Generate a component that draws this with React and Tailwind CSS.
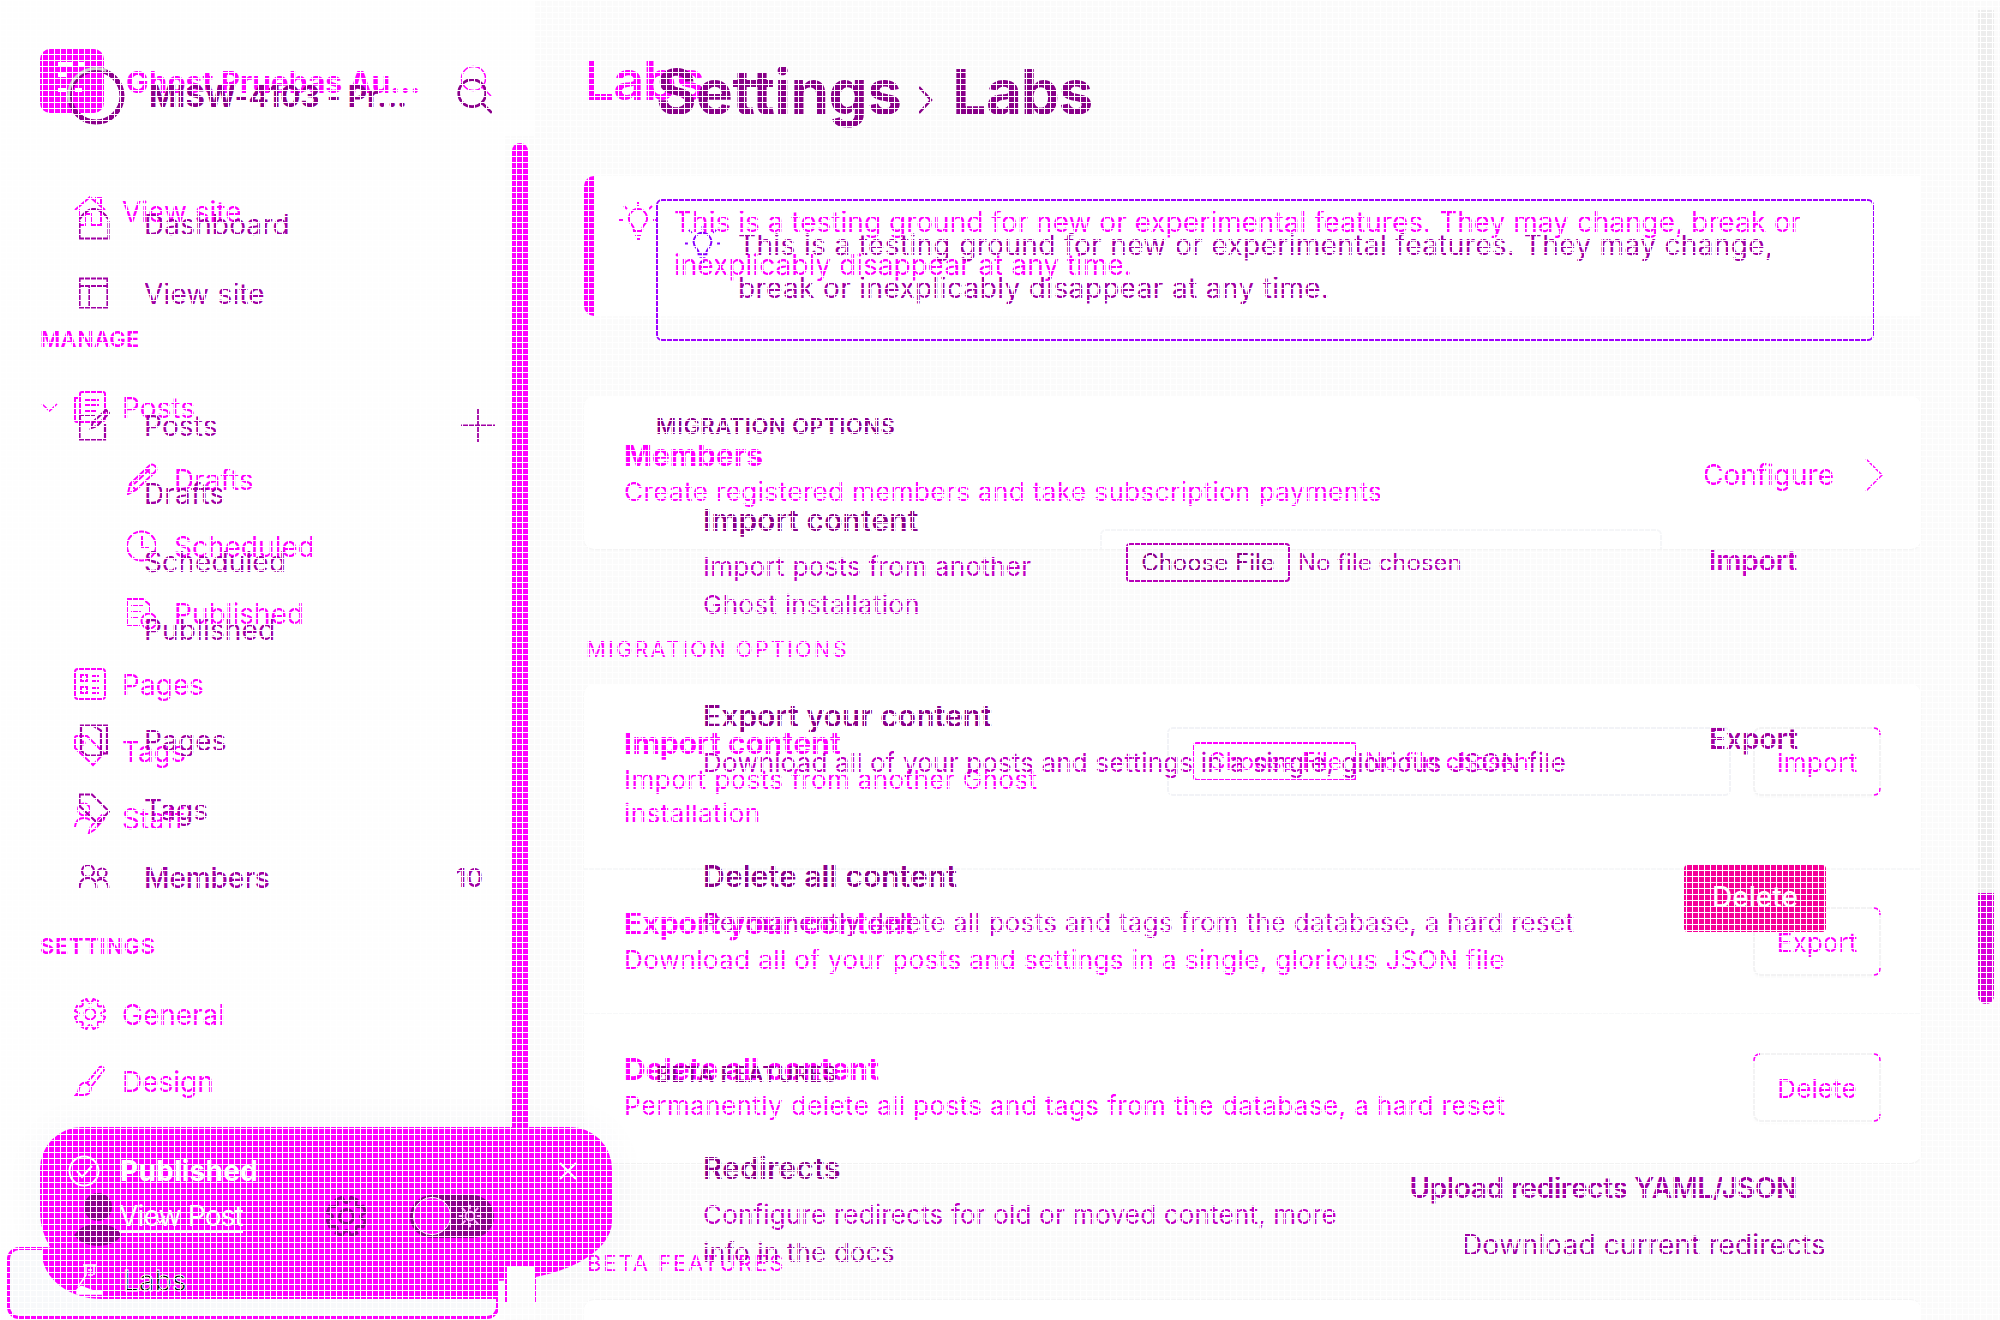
function Svg({ className = "size-8", w = 2, box = "0 0 32 32", children }) {
  return (
    <svg className={"shrink-0 " + className} viewBox={box} fill="none" stroke="currentColor" strokeWidth={w}>
      {children}
    </svg>
  );
}

const gearPath =
  "M12.500 1Q16 9 19.500 1L24 3Q21 10 29 8L31 13Q23 16 31 19L29 24Q21 22 24 29L19.500 31Q16 23 12.500 31L8 29Q11 22 3 24L1 19Q9 16 1 13L3 8Q11 10 8 3Z";

const icons = {
  home: (
    <Svg>
      <path d="M1 15 16 2l15 13M5 14v16h6V19h6v11h10V14M22 6V3h5v8" />
    </Svg>
  ),
  posts: (
    <Svg>
      <rect x="6" y="1" width="25" height="29" rx="2" />
      <path d="M6 7H1v22q0 2 2 2h22M11 9h14M11 14h14M11 20h11" />
    </Svg>
  ),
  pencil: (
    <Svg>
      <path d="M2 31l2-10L23 3q3-3 6 0t0 6L10 27zM4 21l6 6M8 21 24 6M20 6l6 6" />
    </Svg>
  ),
  clock: (
    <Svg>
      <circle cx="15.500" cy="16" r="14.500" />
      <path d="M16 6v11h7" />
    </Svg>
  ),
  doc: (
    <Svg>
      <path d="M14 28H1V2h16l7 6v7M5 9h12M5 15h10M5 21h8" />
      <circle cx="23" cy="24" r="7.500" />
      <path d="m20 24 2 2 4-4" />
    </Svg>
  ),
  list: (
    <Svg>
      <rect x="1" y="1" width="30" height="30" rx="3" />
      <rect x="7" y="7" width="6" height="6" />
      <rect x="7" y="19" width="6" height="6" />
      <path d="M18 8h7M18 13h7M18 20h7M18 25h7" />
    </Svg>
  ),
  tagA: (
    <Svg>
      <path d="M1 3q0-2 2-2h10l17 17-11 12L1 13z" />
      <circle cx="9" cy="8" r="1.500" />
    </Svg>
  ),
  staff: (
    <Svg>
      <circle cx="10" cy="7.500" r="6" />
      <path d="M1 25q1-9 9-9 4 0 6 2M15 31l2-7L28 13q3 0 2 4L20 28z" />
    </Svg>
  ),
  gear: (
    <Svg>
      <path d={gearPath} />
      <circle cx="16" cy="16" r="5.500" />
    </Svg>
  ),
  brush: (
    <Svg>
      <path d="M13 18 26 2q4-1 4 3L17 22M13 18l4 4q0 8-8 8H2q3-3 3-7 2-6 8-5z" />
    </Svg>
  ),
  dashboard: (
    <Svg w="2.200">
      <path d="M1.500 13v17.500h29V13M1.500 11q14-20 29 0" />
    </Svg>
  ),
  layout: (
    <Svg w="2.200">
      <path d="M1.500 1.500h28v29h-28zM1.500 9h28M11.500 9v21" />
    </Svg>
  ),
  edit: (
    <Svg w="2.200">
      <path d="M17 6H1.500v24.500H27V15M13 19l2-6L28 1l3 3-12 13z" />
    </Svg>
  ),
  pages: (
    <Svg w="2.200">
      <path d="M8 1.500h21v28h-5M3 1.500h12l8 5v25H9l-6-5zM3 1.500l5 0" />
    </Svg>
  ),
  tagB: (
    <Svg w="2.200">
      <path d="M1.500 1.500H14l17 17-11 12L1.500 13z" />
    </Svg>
  ),
  members: (
    <Svg w="2.200">
      <circle cx="10" cy="10" r="6" />
      <path d="M1.500 28q0-11 8.500-11t8.500 11M30.500 28q0-8-7-10-3 0-5 2" />
      <circle cx="24" cy="12" r="4.500" />
    </Svg>
  ),
};

function Bulb({ className }) {
  return (
    <Svg className={className} box="0 0 38 38" w="2">
      <path d="M15 29q0-4-2-6-5-5-2-11 3-5 8-5t8 5q3 6-2 11-2 2-2 6zM16 33h6M17 37h4M19 0v4M5 4l3 3M33 4l-3 3M0 18h4M34 18h4" />
    </Svg>
  );
}

function Magnifier({ className, w }) {
  return (
    <Svg className={className} w={w}>
      <circle cx="13.500" cy="13.500" r="12" />
      <path d="m22 22 9 9" />
    </Svg>
  );
}

function NavA({ icon, label, className = "", indent = "pl-[74px]", gap = "gap-4", chevron }) {
  return (
    <div className={"flex h-10 items-center " + (chevron ? "pl-[41px] " : indent + " ") + gap + " " + className}>
      {chevron && (
        <Svg className="h-[9px] w-[17px]" box="0 0 17 9" w="1.500">
          <path d="m1 1 7.500 7L16 1" />
        </Svg>
      )}
      {icons[icon]}
      <span className="pt-px text-[28px] tracking-[0px]">{label}</span>
    </div>
  );
}

function NavB({ icon, label, className = "", right, bold }) {
  return (
    <div className={"flex h-10 items-center pl-[78px] " + className}>
      <span className="w-[66px] shrink-0">{icon && icons[icon]}</span>
      <span className={"grow pt-px text-[28px] " + (bold ? "font-medium tracking-[-0.1px]" : "tracking-[0.15px]")}>{label}</span>
      {right}
    </div>
  );
}

function TextA({ title, children, width = "", className = "" }) {
  return (
    <div className={className + " " + width}>
      <div className="pt-px text-[30px] leading-[36px] font-bold">{title}</div>
      <div className="mt-0.5 text-[26px] leading-[34px] tracking-[0.41px]">{children}</div>
    </div>
  );
}

function TextB({ title, children, width = "", tracking = "tracking-[0.2px]" }) {
  return (
    <div className={width}>
      <div className="pt-px text-[30px] leading-[36px] font-semibold tracking-[0.1px] text-[#8b008b]">{title}</div>
      <div className={"mt-2.5 text-[26px] leading-[38px] text-[#c000c4] " + tracking}>{children}</div>
    </div>
  );
}

function ButtonA({ children, className = "" }) {
  return (
    <div className={"relative flex h-[69px] w-32 shrink-0 items-center justify-center rounded-lg border-2 border-[#f3f3f4] pt-0.5 text-[26px] tracking-[0.1px] shadow-[0_2px_3px_rgba(0,0,0,0.02)] " + className}>
      {children}
      <Svg className="absolute -top-0.5 -right-0.5 size-2" box="0 0 8 8" w="1.500">
        <path d="M1 1q6 0 6 7" />
      </Svg>
      <Svg className="absolute -right-0.5 -bottom-0.5 size-2" box="0 0 8 8" w="1.500">
        <path d="M1 7q6 0 6-7" />
      </Svg>
    </div>
  );
}

function LayerA() {
  return (
    <div className="absolute inset-0 flex text-[#ff00ff]">
      <aside className="h-full w-[505px] shrink-0 bg-[#fefefe]">
        <div className="mt-[49px] flex h-16 items-center pl-10">
          <div className="flex size-16 shrink-0 items-center justify-center rounded-[10px] bg-[#ff00ff] text-white">
            <Svg className="-mt-2 size-8" box="0 0 32 32" w="4">
              <path d="M2 3h14M23 3h5M2 14h8M2 29h8M19 29h7" />
              <path d="m18 21 8-8" strokeWidth="1.500" />
            </Svg>
          </div>
          <div className="ml-[22px] w-[334px] pt-0.5 text-[30px] font-bold whitespace-nowrap">Ghost Pruebas Au...</div>
          <Magnifier className="size-8" w="1.500" />
        </div>
        <NavA icon="home" label="View site" className="mt-[78px]" />
        <div className="mt-[88px] flex h-10 items-center pl-10 text-[22px] font-semibold tracking-[0.3px]">MANAGE</div>
        <NavA icon="posts" label="Posts" className="mt-7" chevron />
        <NavA icon="pencil" label="Drafts" className="mt-8" indent="pl-[126px]" />
        <NavA icon="clock" label="Scheduled" className="mt-[27px]" indent="pl-[126px]" />
        <NavA icon="doc" label="Published" className="mt-[27px]" indent="pl-[126px]" />
        <NavA icon="list" label="Pages" className="mt-[31px]" />
        <NavA icon="tagA" label="Tags" className="mt-[27px]" />
        <NavA icon="staff" label="Staff" className="mt-[27px]" />
        <div className="mt-[88px] flex h-10 items-center pl-10 text-[22px] font-semibold tracking-[0.7px]">SETTINGS</div>
        <NavA icon="gear" label="General" className="mt-7" />
        <NavA icon="brush" label="Design" className="mt-[27px]" />
      </aside>
      <div className="h-full w-[30px] shrink-0 bg-[#fefefe] pt-[136px]">
        <div className="h-full bg-[#fbfbfb] pt-[7px] pl-[7px]">
          <div className="h-[1000px] w-4 rounded-t-lg bg-[#ff00ff]" />
        </div>
      </div>
      <main className="h-full grow overflow-hidden bg-[#fbfbfb] pl-[49px]">
        <div className="mt-[51px] text-[54px] leading-[60px] font-semibold tracking-[-1.3px]">Labs</div>
        <div className="mt-[65px] flex h-[140px] w-[1337px] rounded-l-[10px] border-l-[10px] border-[#ff00ff] bg-white pt-[25px]">
          <Bulb className="mt-px ml-[25px] size-[38px]" />
          <p className="ml-[17px] text-[28px] leading-[43px] whitespace-nowrap tracking-[0.02px]">
            This is a testing ground for new or experimental features. They may change, break or
            <br />
            inexplicably disappear at any time.
          </p>
        </div>
        <section className="mt-20 flex h-[153px] w-[1337px] items-start rounded-[10px] bg-white pt-10 pl-10 shadow-[0_1px_2px_rgba(0,0,0,0.04)]">
          <TextA title="Members" width="grow">Create registered members and take subscription payments</TextA>
          <div className="mt-[18px] mr-[38px] flex items-center text-[28px] leading-10">
            <span className="pt-px">Configure</span>
            <Svg className="ml-[31px] h-8 w-[18px]" box="0 0 18 32" w="1.500">
              <path d="m1 0 16 16L1 32" />
            </Svg>
          </div>
        </section>
        <div className="mt-20 h-[38px] pt-px pl-0.5 text-[22px] leading-[38px] tracking-[2.05px]">MIGRATION OPTIONS</div>
        <section className="mt-[17px] h-[479px] w-[1337px] rounded-[10px] bg-white shadow-[0_1px_2px_rgba(0,0,0,0.05)]">
          <div className="flex h-[184px] items-start pt-10 pr-10 pl-10">
            <TextA title="Import content" width="w-[543px] pr-20">Import posts from another Ghost installation</TextA>
            <div className="mt-[3px] flex h-[69px] w-[564px] items-center rounded-md border-2 border-[#f2f3f7] pl-6 text-[24px]">
              <span className="flex h-[39px] w-[164px] items-center justify-center rounded-sm border-2 border-[#ff00ff]">Choose File</span>
              <span className="ml-2">No file chosen</span>
            </div>
            <ButtonA className="mt-[3px] ml-[22px]">Import</ButtonA>
          </div>
          <div className="flex h-[145px] items-start border-t-2 border-[#f7f8f9] pt-[34px] pr-10 pl-10">
            <TextA title="Export your content" width="grow">Download all of your posts and settings in a single, glorious JSON file</TextA>
            <ButtonA className="mt-[3px]">Export</ButtonA>
          </div>
          <div className="flex h-[150px] items-start border-t border-[#f7f8f9] pt-9 pr-10 pl-10">
            <TextA title="Delete all content" width="grow">Permanently delete all posts and tags from the database, a hard reset</TextA>
            <ButtonA className="mt-[3px]">
              Delete
              <Svg className="absolute -top-0.5 -left-0.5 size-2" box="0 0 8 8" w="1.500">
                <path d="M7 1q-6 0-6 7" />
              </Svg>
            </ButtonA>
          </div>
        </section>
        <div className="mt-[81px] h-[38px] pl-[3px] text-[22px] leading-[38px] tracking-[1.95px]">BETA FEATURES</div>
        <section className="mt-[17px] h-20 w-[1337px] rounded-t-[10px] border-t border-[#f4f4f5] bg-white" />
      </main>
    </div>
  );
}

function Toast() {
  return (
    <>
      <div className="absolute top-[1263px] left-[498px] h-14 w-[38px] bg-[#fcfcfc]" />
      <div className="absolute top-[1127px] left-10 h-[154px] w-[572px] rounded-t-[42px] rounded-br-[120px_60px] rounded-bl-[70px] bg-[#ff00ff] text-white shadow-[0_0_40px_rgba(30,60,90,0.05)]">
        <div className="flex h-[88px] items-center pl-7">
          <Svg className="size-8" w="2">
            <circle cx="16" cy="16" r="14.500" />
            <path d="m9 16 5 6 10-11" />
          </Svg>
          <span className="ml-[20px] w-[439px] text-[28px] font-bold tracking-[0.24px]">Published</span>
          <Svg className="size-[18px]" box="0 0 18 18" w="2">
            <path d="m1 1 16 16M17 1 1 17" />
          </Svg>
        </div>
        <div className="-mt-[13px] ml-[79px] w-[124px] border-b-2 border-white text-[28px] leading-[29px] tracking-[-0.8px] whitespace-nowrap">View Post</div>
      </div>
      <div className="absolute top-[1247px] left-[7px] flex h-[72px] w-[492px] items-start overflow-hidden rounded-xl border-[3px] border-[#ff00ff] bg-[#f8f9fb]">
        <div className="-mt-[3px] ml-[32px] flex h-[52px] w-[455px] shrink-0 items-end rounded-bl-[60px_46px] bg-[#ff00ff] pb-1 pl-[32px]">
          <Svg className="size-8 text-white" w="1.500">
            <path d="M12 2v10L4 24M20 12V2M9 2h14M14 7h4M14 12h5" />
            <path d="M3 27q4-6 8-2 8 4 17 3v3H3z" fill="currentColor" />
          </Svg>
          <span className="ml-[17px] text-[28px] leading-[28px] [-webkit-text-stroke:0.8px_white]">Labs</span>
        </div>
      </div>
      <div className="absolute top-[1264px] left-[505px] h-[38px] w-[31px] border-x-2 border-t-2 border-[#ff00ff] bg-[#fcfcfc]" />
    </>
  );
}

function LayerB() {
  return (
    <div className="absolute inset-0 flex text-[#a000a4]">
      <aside className="flex h-full w-[536px] shrink-0 flex-col">
        <div className="mt-[67px] flex h-[58px] shrink-0 items-center pl-[67px] text-[#8b008b]">
          <Svg className="size-[58px]" box="0 0 58 58" w="5">
            <circle cx="29" cy="29" r="26" />
            <circle cx="29" cy="29" r="27.500" stroke="#cccccc" strokeWidth="3" strokeDasharray="60 200" strokeDashoffset="-80" />
          </Svg>
          <div className="ml-[24px] w-[308px] pt-px text-[30px] font-bold whitespace-nowrap tracking-[-0.1px]">MISW-4103 - Pr...</div>
          <Magnifier className="size-9" w="2.400" />
        </div>
        <NavB icon="dashboard" label="Dashboard" className="mt-[79px]" />
        <NavB icon="layout" label="View site" className="mt-[29px]" />
        <NavB
          icon="edit"
          label="Posts"
          className="mt-[92px]"
          right={
            <Svg className="mr-[41px] size-[34px]" box="0 0 34 34" w="1.800">
              <path d="M17 0v34M0 17.500h34" />
            </Svg>
          }
        />
        <NavB label="Drafts" className="mt-7" />
        <NavB label="Scheduled" className="mt-7" />
        <NavB label="Published" className="mt-7" />
        <NavB icon="pages" label="Pages" className="mt-[71px]" />
        <NavB icon="tagB" label="Tags" className="mt-[29px]" />
        <NavB icon="members" label="Members" bold className="mt-7" right={<span className="mr-[53px] text-[26px] font-medium">10</span>} />
        <div className="mt-[295px] flex h-14 items-center pl-[74px] text-[#8b008b]">
          <svg className="h-14 w-12 shrink-0" viewBox="0 0 48 56" fill="currentColor">
            <ellipse cx="24" cy="15" rx="14" ry="14" />
            <path d="M0 43q8-11 24-11t24 11q-8 11-24 11T0 43z" />
          </svg>
          <Svg className="ml-[32px] h-3 w-3 text-white" box="0 0 12 12" w="1.500">
            <path d="m1 2 5 7 5-7" />
          </Svg>
          <Svg className="mb-2 ml-[160px] size-[41px]" w="2.400">
            <path d={gearPath} />
            <circle cx="16" cy="16" r="5.500" />
          </Svg>
          <div className="mb-2 ml-[43px] flex h-[43px] w-[84px] shrink-0 items-center justify-between rounded-full bg-[#8b008b] pr-3 pl-[3px] text-[#ff9cff]">
            <span className="size-[38px] rounded-full border border-white bg-[#ff00ff]" />
            <Svg className="size-6" w="2.500">
              <circle cx="16" cy="16" r="6" />
              <path d="M16 1v6M16 25v6M1 16h6M25 16h6M5 5l5 5M22 22l5 5M27 5l-5 5M10 22l-5 5" />
            </Svg>
          </div>
        </div>
      </aside>
      <main className="h-full w-[1442px] shrink-0 pl-[120px]">
        <div className="mt-[57px] flex h-[70px] items-center text-[62px] leading-[70px] font-bold text-[#880088]">
          <span className="tracking-[-0.6px]">Settings</span>
          <Svg className="mt-4 ml-[17px] h-7 w-[15px]" box="0 0 15 28" w="2.500">
            <path d="m1 1 12 13L1 27" />
          </Svg>
          <span className="ml-[19px] tracking-[-1.3px]">Labs</span>
        </div>
        <div className="mt-[72px] flex h-[142px] w-[1218px] rounded-md border-2 border-[#a000ff] pt-[23px]">
          <Bulb className="mt-0.5 ml-[26px] size-[37px] text-[#8a00ff]" />
          <p className="ml-[17px] text-[28px] leading-[43px] whitespace-nowrap tracking-[0.37px]">
            This is a testing ground for new or experimental features. They may change,
            <br />
            break or inexplicably disappear at any time.
          </p>
        </div>
        <div className="mt-[70px] h-[30px] text-[22px] leading-[30px] font-semibold tracking-[0.5px] text-[#8b008b]">MIGRATION OPTIONS</div>
        <div className="mt-[60px] ml-[47px] flex h-[122px] w-[1123px] items-start">
          <TextB title="Import content" width="w-[397px]" tracking="tracking-[0.3px]">
            Import posts from another
            <br />
            Ghost installation
          </TextB>
          <div className="mt-7 h-5 w-[562px] rounded-t-md border-x-2 border-t-2 border-[#f5f6f8] pt-[12px] pl-6 text-[24px] text-[#b000b0]">
            <div className="flex items-center">
              <span className="flex h-[39px] w-[164px] items-center justify-center rounded-[4px] border-2 border-[#b800b8] text-[#8b008b]">Choose File</span>
              <span className="ml-2">No file chosen</span>
            </div>
          </div>
          <div className="mt-[41px] mr-[29px] ml-auto text-[28px] leading-[38px] font-semibold tracking-[-0.1px] text-[#c400c4]">Import</div>
        </div>
        <div className="mt-[74px] ml-[47px] flex h-[84px] w-[1123px] items-start">
          <TextB title="Export your content" tracking="tracking-[0.16px]">Download all of your posts and settings in a single, glorious JSON file</TextB>
          <div className="mt-[23px] mr-[28px] ml-auto text-[28px] leading-[38px] font-semibold text-[#a000a0]">Export</div>
        </div>
        <div className="mt-[76px] ml-[47px] flex h-[84px] w-[1123px] items-start">
          <TextB title="Delete all content" tracking="tracking-[0.26px]">Permanently delete all posts and tags from the database, a hard reset</TextB>
          <div className="mt-2 ml-auto flex h-[67px] w-[142px] items-center justify-center rounded bg-[#f50096] pb-1 text-[28px] font-medium text-white">Delete</div>
        </div>
        <div className="mt-[118px] h-[30px] text-[22px] leading-[30px] font-semibold tracking-[0.5px] text-[#8b008b]">BETA FEATURES</div>
        <div className="mt-[60px] ml-[47px] flex w-[1123px] items-start">
          <TextB title="Redirects" tracking="tracking-[0.18px]">
            Configure redirects for old or moved content, more
            <br />
            <span className="text-[#a000a0]">info in the docs</span>
          </TextB>
          <div className="mt-[19px] ml-auto flex flex-col items-end text-[28px] leading-10 whitespace-nowrap">
            <div className="mr-[29px] font-semibold tracking-[-0.35px]">Upload redirects YAML/JSON</div>
            <div className="mt-[17px] tracking-[0.14px]">Download current redirects</div>
          </div>
        </div>
      </main>
      <div className="flex h-full w-4 shrink-0 flex-col pt-2.5">
        <div className="h-[884px] bg-[#ededed]" />
        <div className="-mt-px h-[111px] rounded-b-lg bg-[#d900d9]" />
      </div>
    </div>
  );
}

export default function App() {
  return (
    <div className="relative h-[1320px] w-[2000px] overflow-hidden bg-white font-['Inter',sans-serif]">
      <LayerA />
      <Toast />
      <LayerB />
      <div className="pointer-events-none absolute inset-0 bg-[linear-gradient(to_right,#ffffff_1px,transparent_1px),linear-gradient(to_bottom,#ffffff_1px,transparent_1px)] bg-[size:6px_6px]" />
    </div>
  );
}
